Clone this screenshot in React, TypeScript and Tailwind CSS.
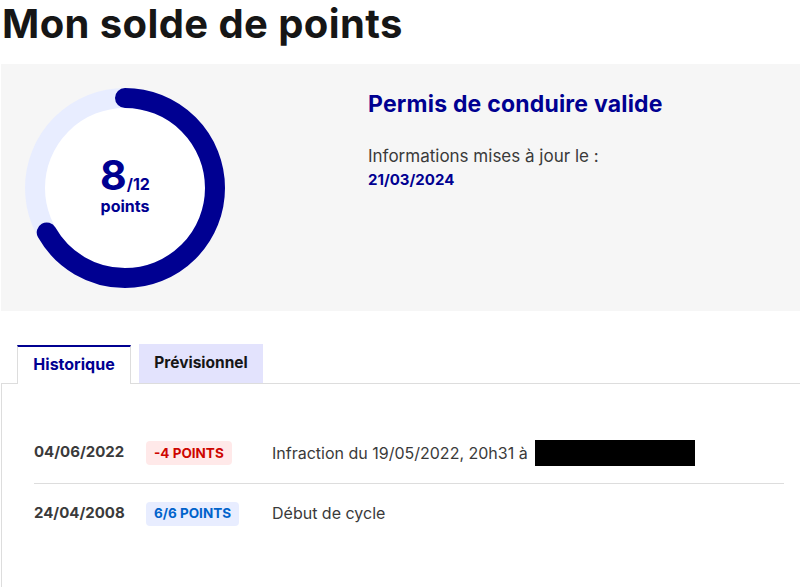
import React from "react";

function Gauge() {
  const r = 90;
  const c = 2 * Math.PI * r;
  const frac = 8 / 12;
  return (
    <div className="relative w-[200px] h-[200px]">
      <svg width="200" height="200" viewBox="0 0 200 200" className="absolute inset-0">
        <circle cx="100" cy="100" r={r} fill="white" stroke="#e8edff" strokeWidth="20" />
        <circle
          cx="100"
          cy="100"
          r={r}
          fill="none"
          stroke="#000091"
          strokeWidth="20"
          strokeLinecap="round"
          strokeDasharray={`${c * frac} ${c}`}
          transform="rotate(-90 100 100)"
        />
      </svg>
      <div className="absolute inset-0 flex flex-col items-center justify-center text-[#000091]">
        <div className="flex items-baseline leading-none -mt-[8px]">
          <span className="text-[41px] font-bold leading-none">8</span>
          <span className="text-[16px] font-bold leading-none">/12</span>
        </div>
        <span className="text-[16px] font-bold leading-none mt-[2px]">points</span>
      </div>
    </div>
  );
}

export default function App() {
  return (
    <div className="w-[800px] h-[587px] bg-white overflow-hidden text-[#161616]" style={{ fontFamily: "Inter, 'Noto Sans', sans-serif" }}>
      <h1 className="text-[40px] font-bold leading-[48px] pl-[2px] h-[64px] tracking-[0.4px]">Mon solde de points</h1>
      <div className="ml-[1px] bg-[#f6f6f6] h-[247px] flex">
        <div className="pl-[24px] pt-[24px]">
          <Gauge />
        </div>
        <div className="pl-[143px] pt-[25px]">
          <div className="text-[23px] font-bold text-[#000091] leading-[30px] tracking-[0.2px]">Permis de conduire valide</div>
          <div className="mt-[25px] text-[17px] text-[#3a3a3a] leading-[24px]">Informations mises à jour le :</div>
          <div className="text-[15px] font-bold text-[#000091] leading-[24px]">21/03/2024</div>
        </div>
      </div>
      <div className="mt-[33px] ml-[1px]">
        <div className="flex pl-[16px] gap-[8px] h-[39px] items-end">
          <div className="h-[39px] w-[114px] bg-white border-t-2 border-t-[#000091] border-x border-x-[#dddddd] flex items-center justify-center pb-[3px] text-[16px] font-bold text-[#000091] relative -mb-px z-10">
            Historique
          </div>
          <div className="h-[39px] w-[124px] bg-[#e3e3fd] flex items-center justify-center pb-[1px] text-[15.5px] font-bold text-[#161616]">
            Prévisionnel
          </div>
        </div>
        <div className="border-t border-l border-[#dddddd] h-[220px] pl-[32px] pr-[16px] pt-[38px]">
          <div className="flex items-center h-[62px] border-b border-[#dddddd]">
            <div className="w-[112px] text-[15px] font-bold text-[#3a3a3a]">04/06/2022</div>
            <div className="w-[126px]">
              <span className="inline-flex items-center h-[24px] px-[8px] rounded-[4px] bg-[#ffe9e9] text-[#ce0500] text-[13.5px] font-bold uppercase">-4 points</span>
            </div>
            <div className="text-[16px] text-[#3a3a3a] flex items-center">
              Infraction du 19/05/2022, 20h31 à
              <span className="inline-block ml-[7px] w-[160px] h-[26px] bg-black" />
            </div>
          </div>
          <div className="flex items-center h-[58px]">
            <div className="w-[112px] text-[15px] font-bold text-[#3a3a3a]">24/04/2008</div>
            <div className="w-[126px]">
              <span className="inline-flex items-center h-[24px] px-[8px] rounded-[4px] bg-[#e8edff] text-[#0063cb] text-[13.5px] font-bold uppercase">6/6 points</span>
            </div>
            <div className="text-[16px] text-[#3a3a3a]">Début de cycle</div>
          </div>
        </div>
      </div>
    </div>
  );
}
